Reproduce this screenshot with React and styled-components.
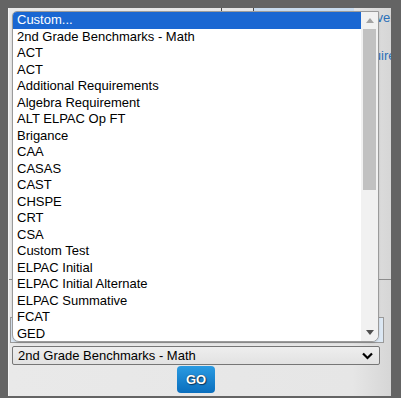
import React from "react";
import styled, { createGlobalStyle } from "styled-components";

const GlobalStyle = createGlobalStyle`
  html, body {
    margin: 0;
    padding: 0;
    background: #646464;
    font-family: "Liberation Sans", Arial, sans-serif;
  }
`;

const Page = styled.div`
  padding: 8px 10px 2px 8px;
  height: 398px;
  box-sizing: border-box;
`;

const Panel = styled.div`
  position: relative;
  width: 383px;
  height: 388px;
  box-sizing: border-box;
  overflow: hidden;
  border-left: 1px solid #f4f4f4;
  background: linear-gradient(90deg, #e9e9e9 0%, #e6e6e6 90%, #d6d6d6 100%);
  display: flex;
  flex-direction: column;
`;

const HeadRow = styled.div`
  display: flex;
  height: 20px;
  flex-shrink: 0;
`;

const HeadCell = styled.div`
  width: ${(p) => p.w}px;
  flex-shrink: 0;
  border-right: ${(p) => (p.line ? "1px solid #4a4a4a" : "none")};
  background: ${(p) => p.bg || "transparent"};
  font-size: 13px;
  line-height: 20px;
  color: ${(p) => p.color || "#333"};
  padding-left: ${(p) => p.pad || 0}px;
  white-space: nowrap;
  box-sizing: border-box;
`;

const InfoRow = styled.div`
  height: 20px;
  margin-top: 18px;
  padding-left: ${(p) => p.pad}px;
  font-size: 13px;
  line-height: 20px;
  color: #2a6fb8;
  white-space: nowrap;
  flex-shrink: 0;
`;

const Divider = styled.div`
  margin-top: 213px;
  height: 37px;
  border-top: 1px solid #8c8c8c;
  flex-shrink: 0;
`;

const TextInput = styled.div`
  margin-left: 1px;
  width: 374px;
  height: 26px;
  box-sizing: border-box;
  border: 1px solid #9a9a9a;
  background: #dce8f4;
  flex-shrink: 0;
`;

const Select = styled.div`
  margin: 3px 0 0 3px;
  width: 368px;
  height: 19px;
  box-sizing: border-box;
  border: 1px solid #767676;
  border-radius: 2px;
  background: linear-gradient(#eeeeee, #e2e2e2);
  display: flex;
  align-items: center;
  justify-content: space-between;
  padding: 0 6px 0 5px;
  font-size: 13px;
  color: #000;
  flex-shrink: 0;
`;

const ButtonRow = styled.div`
  display: flex;
  justify-content: center;
  width: 374px;
  padding-top: 1px;
`;

const GoButton = styled.button`
  width: 38px;
  height: 27px;
  border: none;
  border-radius: 4px;
  background: linear-gradient(#2a9be2, #0a6ebd);
  color: #fff;
  font-family: "Liberation Sans", Arial, sans-serif;
  font-weight: bold;
  font-size: 13px;
  text-shadow: 0 0 1px #123, 1px 1px 1px #0b3a66;
  padding: 0;
`;

const ListBox = styled.div`
  position: absolute;
  top: 3px;
  left: 3px;
  width: 367px;
  height: 331px;
  box-sizing: border-box;
  border: 1px solid #9b9b9b;
  border-radius: 5px 0 7px 7px;
  background: #fff;
  display: flex;
  overflow: hidden;
  box-shadow: 0 1px 2px rgba(0, 0, 0, 0.15);
`;

const Options = styled.div`
  flex: 1;
  display: flex;
  flex-direction: column;
`;

const Option = styled.div`
  height: 16.5px;
  line-height: 16.5px;
  padding-left: 4px;
  font-size: 13px;
  white-space: nowrap;
  color: ${(p) => (p.selected ? "#fff" : "#000")};
  background: ${(p) => (p.selected ? "#1a67d2" : "transparent")};
`;

const ScrollTrack = styled.div`
  width: 17px;
  background: #f1f1f1;
  display: flex;
  flex-direction: column;
  align-items: center;
`;

const ArrowBox = styled.div`
  height: 17px;
  width: 17px;
  display: flex;
  align-items: center;
  justify-content: center;
  flex-shrink: 0;
`;

const Thumb = styled.div`
  width: 13px;
  height: 161px;
  background: #c1c1c1;
  flex-shrink: 0;
`;

const Spacer = styled.div`
  flex: 1;
`;

const items = [
  "2nd Grade Benchmarks - Math",
  "ACT",
  "ACT",
  "Additional Requirements",
  "Algebra Requirement",
  "ALT ELPAC Op FT",
  "Brigance",
  "CAA",
  "CASAS",
  "CAST",
  "CHSPE",
  "CRT",
  "CSA",
  "Custom Test",
  "ELPAC Initial",
  "ELPAC Initial Alternate",
  "ELPAC Summative",
  "FCAT",
  "GED",
];

function Triangle({ up, color }) {
  return (
    <svg width="8" height="5" viewBox="0 0 8 5">
      <path d={up ? "M0 5 L4 0 L8 5 Z" : "M0 0 L8 0 L4 5 Z"} fill={color} />
    </svg>
  );
}

export default function App() {
  return (
    <>
      <GlobalStyle />
      <Page>
        <Panel>
          <HeadRow>
            <HeadCell w={213} line />
            <HeadCell w={32} line />
            <HeadCell w={100} bg="#c9dcef" pad={40}>Measure</HeadCell>
            <HeadCell w={38} color="#2a6fb8" pad={6}>Cover</HeadCell>
          </HeadRow>
          <InfoRow pad={341}>Require</InfoRow>
          <Divider />
          <TextInput />
          <Select>
            <span>2nd Grade Benchmarks - Math</span>
            <svg width="11" height="8" viewBox="0 0 11 8">
              <path d="M1 1.5 L5.5 6 L10 1.5" stroke="#000" strokeWidth="2.2" fill="none" />
            </svg>
          </Select>
          <ButtonRow>
            <GoButton>GO</GoButton>
          </ButtonRow>

          <ListBox>
            <Options>
              <Option selected>Custom...</Option>
              {items.map((item, key) => (
                <Option key={key}>{item}</Option>
              ))}
            </Options>
            <ScrollTrack>
              <ArrowBox>
                <Triangle up color="#a3a3a3" />
              </ArrowBox>
              <Thumb />
              <Spacer />
              <ArrowBox>
                <Triangle color="#505050" />
              </ArrowBox>
            </ScrollTrack>
          </ListBox>
        </Panel>
      </Page>
    </>
  );
}
